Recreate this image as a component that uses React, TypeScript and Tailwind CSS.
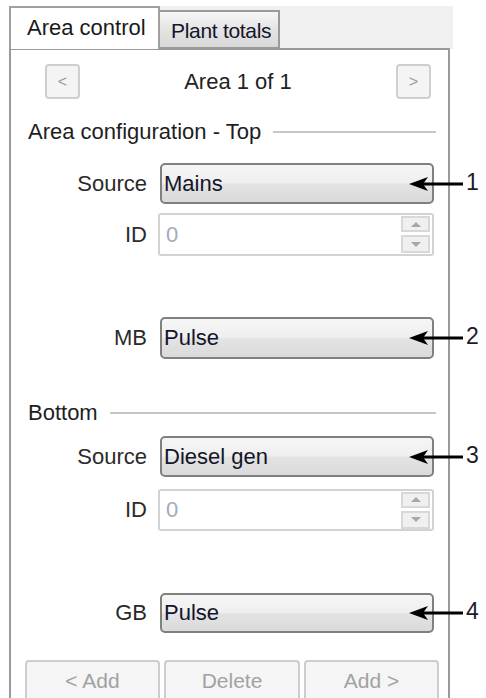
import React from 'react';

const font = { fontFamily: '"Liberation Sans", Arial, sans-serif' };

const Pointer: React.FC<{ n: string }> = ({ n }) => (
  <div className="absolute left-[397px] top-1/2 -translate-y-1/2 flex items-center pointer-events-none">
    <svg width="55" height="18" viewBox="0 0 55 18">
      <path d="M12 9 H55" stroke="#000" strokeWidth="3" />
      <path d="M1 9 L20 2 L15 9 L20 16 Z" fill="#000" />
    </svg>
    <span className="ml-[3px] text-[23px] leading-none text-[#1b1b2b] -mt-[3px]">{n}</span>
  </div>
);

const Heading: React.FC<{ label: string }> = ({ label }) => (
  <div className="flex items-center h-[22px] pl-[17px] pr-[12px]">
    <span className="text-[22px] leading-none text-[#1e1e1e] whitespace-nowrap">{label}</span>
    <div className="flex-1 ml-[12px] h-[2px] bg-[#c6c6c6]" />
  </div>
);

const Row: React.FC<{ label: string; children: React.ReactNode; className?: string }> = ({ label, children, className }) => (
  <div className={`relative flex items-center ${className ?? ''}`}>
    <div className="w-[136px] text-right text-[22px] leading-none text-[#2a2a2a]">{label}</div>
    {children}
  </div>
);

const Dropdown: React.FC<{ label: string; value: string; n: string; className?: string }> = ({ label, value, n, className }) => (
  <Row label={label} className={className}>
    <div className="ml-[13px] w-[274px] h-full flex items-center border-2 border-[#808080] rounded-[5px] bg-[linear-gradient(to_bottom,#f6f6f6_0%,#efefef_48%,#e3e3e3_52%,#dadada_100%)] pl-[2px]">
      <span className="text-[22px] leading-none text-[#14142a]">{value}</span>
    </div>
    <Pointer n={n} />
  </Row>
);

const SpinBox: React.FC<{ className?: string }> = ({ className }) => (
  <Row label="ID" className={className}>
    <div className="ml-[11px] w-[276px] h-full flex items-center justify-between border-2 border-[#d2d2d2] rounded-[3px] bg-white pl-[6px] pr-[2px]">
      <span className="text-[22px] leading-none text-[#a3abbb]">0</span>
      <div className="flex flex-col gap-[3px]">
        <div className="w-[29px] h-[16px] border-2 border-[#d8d8d8] bg-[#f0f0f0] flex items-center justify-center">
          <div className="w-0 h-0 border-l-[5px] border-r-[5px] border-b-[5px] border-l-transparent border-r-transparent border-b-[#a8a8a8]" />
        </div>
        <div className="w-[29px] h-[18px] border-2 border-[#d8d8d8] bg-[#f0f0f0] flex items-center justify-center">
          <div className="w-0 h-0 border-l-[5px] border-r-[5px] border-t-[5px] border-l-transparent border-r-transparent border-t-[#a8a8a8]" />
        </div>
      </div>
    </div>
  </Row>
);

const NavButton: React.FC<{ label: string }> = ({ label }) => (
  <div className="w-[35px] h-[35px] border-2 border-[#cfcfcf] rounded-[4px] bg-[#f4f4f4] flex items-center justify-center text-[16px] text-[#9a9a9a]">
    {label}
  </div>
);

const FootButton: React.FC<{ label: string; w: string }> = ({ label, w }) => (
  <div className={`${w} h-[42px] border-2 border-b-0 border-[#cdcdcd] rounded-t-[4px] bg-[#f5f5f5] flex justify-center pt-[8px] text-[21px] leading-none text-[#a2a2a2]`}>
    {label}
  </div>
);

export default function App() {
  return (
    <div className="w-[486px] h-[698px] bg-white overflow-hidden pt-[6px]" style={font}>
      <div className="ml-[9px] w-[444px] h-[43px] -mb-px bg-[#f0f0f0] flex items-end">
        <div className="relative z-10 w-[151px] h-[43px] bg-white border-2 border-b-0 border-[#a0a0a0] pl-[16px] pt-[9px] text-[22px] leading-none text-[#1a1a1a]">
          Area control
        </div>
        <div className="w-[122px] h-[39px] -ml-[2px] border-2 border-[#9a9a9a] bg-[linear-gradient(to_bottom,#f6f6f6,#e4e4e4_50%,#d8d8d8)] pl-[11px] pt-[8px] text-[21px] leading-none text-[#14142a] tracking-[-0.3px]">
          Plant totals
        </div>
      </div>
      <div className="ml-[9px] w-[441px] h-[660px] border-2 border-b-0 border-[#9a9a9a]">
        <div className="mt-[14px] h-[35px] flex items-center justify-between pl-[34px] pr-[17px]">
          <NavButton label="<" />
          <span className="text-[22px] leading-none text-[#222]">Area 1 of 1</span>
          <NavButton label=">" />
        </div>
        <div className="mt-[22px]">
          <Heading label="Area configuration - Top" />
        </div>
        <Dropdown label="Source" value="Mains" n="1" className="mt-[20px] h-[41px]" />
        <SpinBox className="mt-[9px] h-[43px]" />
        <Dropdown label="MB" value="Pulse" n="2" className="mt-[61px] h-[42px]" />
        <div className="mt-[43px]">
          <Heading label="Bottom" />
        </div>
        <Dropdown label="Source" value="Diesel gen" n="3" className="mt-[12px] h-[41px]" />
        <SpinBox className="mt-[12px] h-[42px]" />
        <Dropdown label="GB" value="Pulse" n="4" className="mt-[62px] h-[40px]" />
        <div className="mt-[27px] flex pl-[14px] gap-[4px]">
          <FootButton label="< Add" w="w-[135px]" />
          <FootButton label="Delete" w="w-[136px]" />
          <FootButton label="Add >" w="w-[135px]" />
        </div>
      </div>
    </div>
  );
}
